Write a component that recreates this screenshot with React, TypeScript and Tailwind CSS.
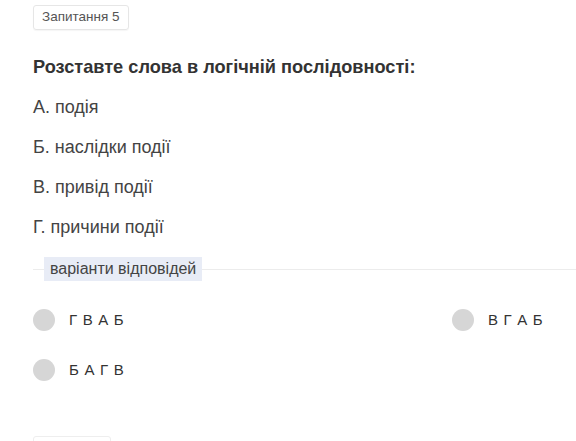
import React from 'react';

const items = ['А. подія', 'Б. наслідки події', 'В. привід події', 'Г. причини події'];

const options = [
  ['Г В А Б', 'В Г А Б'],
  ['Б А Г В'],
];

const Radio: React.FC<{ label: string }> = ({ label }) => (
  <label className="flex items-center gap-[14px] cursor-pointer">
    <span className="w-[22px] h-[22px] rounded-full bg-[#d6d6d6]" />
    <span className="text-[15px] tracking-[0.7px] text-[#333]">{label}</span>
  </label>
);

export default function App() {
  return (
    <div className="min-h-screen bg-white pl-[33px] font-['Liberation_Sans',Arial,sans-serif] overflow-hidden">
      <div className="pt-[4px]">
        <span className="inline-flex h-[25px] items-center px-[8px] border border-[#e6e6e6] rounded-[3px] text-[13.5px] text-[#555] shadow-[0_1px_1px_rgba(0,0,0,0.04)]">
          Запитання 5
        </span>
      </div>

      <h2 className="mt-[27px] text-[18.2px] font-bold text-[#333] leading-[20px]">
        Розставте слова в логічній послідовності:
      </h2>

      <div className="mt-[20px] flex flex-col gap-[20px]">
        {items.map((t) => (
          <p key={t} className="text-[18px] text-[#444] leading-[20px]">{t}</p>
        ))}
      </div>

      <div className="relative mt-[20px] h-[24px]">
        <div className="absolute left-0 right-0 top-[12px] border-t border-[#ececec]" />
        <span className="absolute left-[11px] top-0 h-[24px] inline-flex items-center px-[6px] bg-[#e8ecf6] text-[16px] text-[#444]">
          варіанти відповідей
        </span>
      </div>

      <div className="mt-[28px] flex flex-col gap-[28px]">
        {options.map((row, i) => (
          <div key={i} className="grid grid-cols-[419px_1fr]">
            {row.map((o) => (
              <Radio key={o} label={o} />
            ))}
          </div>
        ))}
      </div>

      <div className="mt-[54px] w-[78px] h-[20px] border border-[#eee] rounded-[3px]" />
    </div>
  );
}
